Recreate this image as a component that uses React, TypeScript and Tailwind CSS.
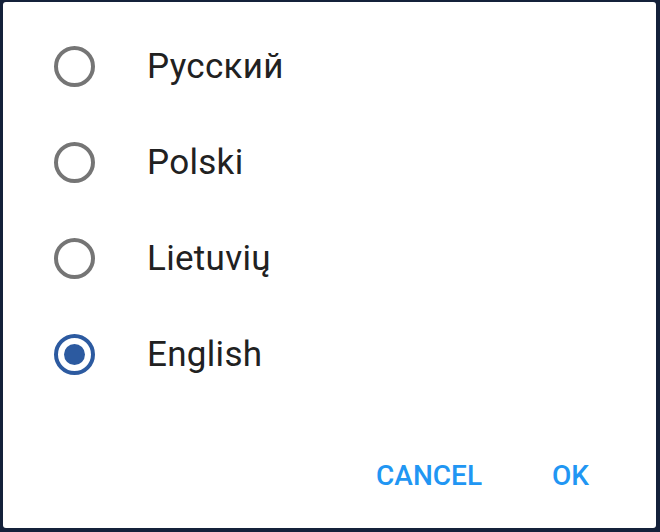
import React from "react";

const langs = [
  { name: "Русский", selected: false },
  { name: "Polski", selected: false },
  { name: "Lietuvių", selected: false },
  { name: "English", selected: true },
];

export default function App() {
  return (
    <div
      className="w-[660px] h-[532px] bg-[#14213a] pt-[2px] pl-[3px] pr-[4px] pb-[4px]"
      style={{ fontFamily: "Roboto, 'Noto Sans', sans-serif" }}
    >
      <div className="w-full h-full bg-white rounded-[3px] flex flex-col">
        <div className="pt-[16px] flex flex-col">
          {langs.map((l) => (
            <div key={l.name} className="h-[96px] flex items-center">
              <div className="ml-[50px] w-[42px] h-[42px] flex items-center justify-center">
                {l.selected ? (
                  <div className="w-[41px] h-[41px] rounded-full border-[4px] border-[#2c5aa0] flex items-center justify-center">
                    <div className="w-[21px] h-[21px] rounded-full bg-[#2c5aa0]" />
                  </div>
                ) : (
                  <div className="w-[41px] h-[41px] rounded-full border-[4px] border-[#757575]" />
                )}
              </div>
              <span className="ml-[52px] text-[35px] leading-none tracking-[0.3px] text-[#212121]">{l.name}</span>
            </div>
          ))}
        </div>
        <div className="flex justify-end items-center mt-[60px] pr-[67px] gap-[70px]">
          <span className="text-[28px] leading-none font-medium text-[#2196f3]">CANCEL</span>
          <span className="text-[28px] leading-none font-medium text-[#2196f3]">OK</span>
        </div>
      </div>
    </div>
  );
}
